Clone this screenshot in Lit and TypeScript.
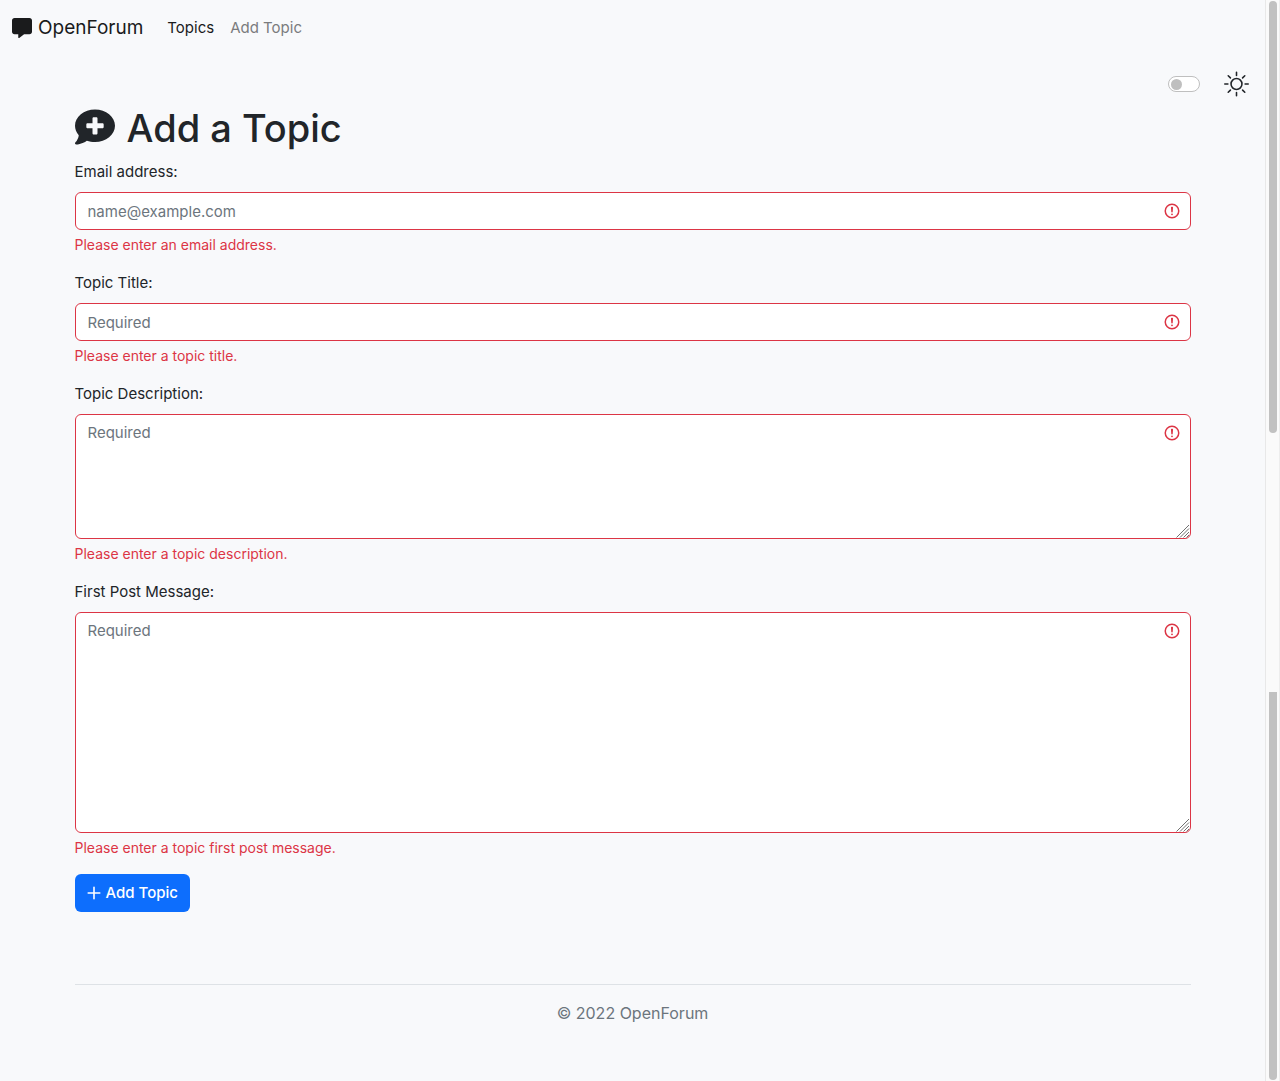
import { LitElement, html, svg, css, nothing } from "lit";
import { customElement, state } from "lit/decorators.js";

interface Field {
  id: string;
  label: string;
  placeholder: string;
  error: string;
  kind: "email" | "text" | "short" | "long";
}

const FIELDS: Field[] = [
  { id: "email", label: "Email address:", placeholder: "name@example.com", error: "Please enter an email address.", kind: "email" },
  { id: "title", label: "Topic Title:", placeholder: "Required", error: "Please enter a topic title.", kind: "text" },
  { id: "description", label: "Topic Description:", placeholder: "Required", error: "Please enter a topic description.", kind: "short" },
  { id: "message", label: "First Post Message:", placeholder: "Required", error: "Please enter a topic first post message.", kind: "long" },
];

const messageIcon = svg`<svg class="icon brand-icon" viewBox="0 0 512 512" aria-hidden="true"><path d="M64 0C28.7 0 0 28.7 0 64V352c0 35.3 28.7 64 64 64h96v80c0 6.1 3.4 11.6 8.8 14.3s11.9 2.1 16.8-1.5L309.3 416H448c35.3 0 64-28.7 64-64V64c0-35.3-28.7-64-64-64H64z"/></svg>`;

const commentIcon = svg`<svg class="icon title-icon" viewBox="0 12 512 512" aria-hidden="true"><path d="M256 448c141.4 0 256-93.1 256-208S397.4 32 256 32S0 125.1 0 240c0 45.1 17.7 86.8 47.7 120.9c-1.9 24.5-11.4 46.3-21.4 62.9c-5.5 9.2-11.1 16.6-15.2 21.6c-2.1 2.5-3.7 4.4-4.9 5.7c-.6 .6-1 1.1-1.3 1.4l-.3 .3c-4.6 4.6-5.9 11.4-3.4 17.4c2.5 6 8.3 9.9 14.8 9.9c28.7 0 57.6-8.9 81.6-19.3c22.9-10 42.4-21.9 54.3-30.6c31.8 11.5 67 17.9 104.1 17.9zM224 145c0-8.8 7.2-16 16-16h32c8.8 0 16 7.2 16 16v63h63c8.8 0 16 7.2 16 16v32c0 8.8-7.2 16-16 16H288v63c0 8.8-7.2 16-16 16H240c-8.8 0-16-7.2-16-16V272H161c-8.8 0-16-7.2-16-16V224c0-8.8 7.2-16 16-16h63V145z"/></svg>`;

const plusIcon = svg`<svg class="plus-icon" viewBox="0 0 14 16" aria-hidden="true"><path d="M7 2.2v11.6M1.2 8h11.6" fill="none" stroke="currentColor" stroke-width="1.6" stroke-linecap="round"/></svg>`;

const sunIcon = svg`<svg class="sun-icon" viewBox="0 0 16 16" aria-hidden="true"><circle cx="8" cy="8" r="3.5"/><path d="M8 .5v2M8 13.5v2M.5 8h2M13.5 8h2M2.7 2.7l1.41 1.41M11.89 11.89l1.41 1.41M2.7 13.3l1.41-1.41M11.89 4.11l1.41-1.41"/></svg>`;

const alertIcon = svg`<svg class="alert-icon" viewBox="0 0 12 12" aria-hidden="true"><circle cx="6" cy="6" r="4.5" fill="none" stroke="currentColor"/><path d="M5.8 3.6h.4L6 6.5z" fill="none" stroke="currentColor" stroke-linejoin="round"/><circle cx="6" cy="8.2" r=".6" fill="currentColor"/></svg>`;

const gripIcon = svg`<svg class="grip-icon" viewBox="0 0 14 14" aria-hidden="true"><path d="M0.5 13.5L13 1M4 13.5L13 4.5M7.5 13.5L13 8M10.5 13.5L13 11"/></svg>`;

@customElement("app-root")
export class AppRoot extends LitElement {
  @state() private dark = false;

  static styles = css`
    :host {
      display: flex;
      min-height: 100vh;
      background: #f8f9fb;
      color: #212529;
      font: 400 15px/24px Inter, "Liberation Sans", sans-serif;
    }
    *, *::before, *::after { box-sizing: border-box; }
    a { color: inherit; text-decoration: none; }
    .icon { fill: currentColor; flex: none; }

    .page { flex: 1; min-width: 0; }
    .navbar {
      display: flex;
      align-items: center;
      gap: 24px;
      height: 56px;
      padding: 0 12px;
      color: #1a1b1c;
    }
    .brand {
      display: flex;
      align-items: center;
      gap: 6px;
      font-size: 19px;
    }
    .brand-icon { width: 20px; height: 20px; }
    .links { display: flex; gap: 16px; }
    .link-muted { color: #7b7c7e; }

    .theme {
      display: flex;
      justify-content: flex-end;
      align-items: center;
      gap: 24px;
      height: 48px;
      padding: 8px 16px 0 0;
    }
    .switch {
      appearance: none;
      display: flex;
      align-items: center;
      width: 32px;
      height: 16px;
      margin: 0;
      padding: 0 2px;
      border: 1px solid #bfbfbf;
      border-radius: 8px;
      background: #fff;
    }
    .switch::before {
      content: "";
      width: 11px;
      height: 11px;
      border-radius: 50%;
      background: #bfbfbf;
    }
    .switch:checked { justify-content: flex-end; }
    .sun-icon {
      width: 25px;
      height: 26px;
      fill: none;
      stroke: #212529;
      stroke-linecap: round;
    }

    .container {
      max-width: 1140px;
      margin: 0 auto;
      padding: 0 12px;
    }
    .title {
      display: flex;
      align-items: center;
      gap: 12px;
      margin: 0 0 8px;
      font-size: 38px;
      line-height: 48px;
      font-weight: 500;
    }
    .title-icon { width: 40px; height: 40px; }

    .field { margin-bottom: 16px; }
    .label { display: block; margin-bottom: 8px; }
    .control { position: relative; }
    .input {
      display: block;
      width: 100%;
      height: 38px;
      margin: 0;
      padding: 6px 36px 6px 12px;
      border: 1px solid #dc3545;
      border-radius: 6px;
      background: #fff;
      color: #212529;
      font: inherit;
    }
    .input::placeholder { color: #6c757d; opacity: 1; }
    .input::-webkit-resizer { background: transparent; }
    .short { height: 125px; resize: vertical; }
    .long { height: 221px; resize: vertical; }
    .alert-icon {
      position: absolute;
      top: 10px;
      right: 10px;
      width: 18px;
      height: 18px;
      color: #dc3545;
      pointer-events: none;
    }
    .grip-icon {
      position: absolute;
      right: 1px;
      bottom: 1px;
      width: 14px;
      height: 14px;
      fill: none;
      stroke: #707070;
      pointer-events: none;
    }
    .error {
      margin: 4px 0 0;
      color: #dc3545;
      font-size: 14px;
      line-height: 21px;
    }
    .submit {
      display: flex;
      align-items: center;
      gap: 5px;
      height: 38px;
      padding: 0 12px;
      border: 0;
      border-radius: 6px;
      background: #0d6efd;
      color: #fff;
      font: inherit;
      font-weight: 500;
      cursor: pointer;
    }
    .plus-icon { width: 14px; height: 16px; }

    .footer {
      margin-top: 72px;
      padding: 16px 0 56px;
      border-top: 1px solid #dee2e6;
      color: #6c757d;
      font-size: 16px;
      text-align: center;
    }

    .scroll-track {
      display: flex;
      flex-direction: column;
      justify-content: space-between;
      flex: none;
      width: 15px;
      padding: 1px 2px 1px 3px;
      border-left: 1px solid #e8e8e8;
      border-right: 1px solid #ededed;
      background: #fafafa;
    }
    .thumb { background: #c1c1c1; }
    .thumb-top { height: 40%; border-radius: 4px; }
    .thumb-bottom { height: 36%; border-radius: 0 0 4px 4px; }
  `;

  private renderField(f: Field) {
    const area = f.kind === "short" || f.kind === "long";
    return html`
      <div class="field">
        <label class="label" for=${f.id}>${f.label}</label>
        <div class="control">
          ${area
            ? html`<textarea class="input ${f.kind}" id=${f.id} placeholder=${f.placeholder} aria-invalid="true" aria-describedby="${f.id}-error"></textarea>`
            : html`<input class="input" id=${f.id} type=${f.kind} placeholder=${f.placeholder} aria-invalid="true" aria-describedby="${f.id}-error" />`}
          ${alertIcon}
          ${area ? gripIcon : nothing}
        </div>
        <p class="error" id="${f.id}-error">${f.error}</p>
      </div>
    `;
  }

  render() {
    return html`
      <div class="page">
        <nav class="navbar">
          <a class="brand" href="#">${messageIcon}<span>OpenForum</span></a>
          <div class="links">
            <a href="#topics">Topics</a>
            <a class="link-muted" href="#add">Add Topic</a>
          </div>
        </nav>
        <div class="theme">
          <input class="switch" type="checkbox" role="switch" id="theme" aria-label="Dark mode"
            .checked=${this.dark}
            @change=${(e: Event) => (this.dark = (e.target as HTMLInputElement).checked)} />
          ${sunIcon}
        </div>
        <main class="container">
          <h1 class="title">${commentIcon}<span>Add a Topic</span></h1>
          <form novalidate @submit=${(e: Event) => e.preventDefault()}>
            ${FIELDS.map((f) => this.renderField(f))}
            <button class="submit" type="submit">${plusIcon}<span>Add Topic</span></button>
          </form>
          <footer class="footer">© 2022 OpenForum</footer>
        </main>
      </div>
      <div class="scroll-track" aria-hidden="true">
        <div class="thumb thumb-top"></div>
        <div class="thumb thumb-bottom"></div>
      </div>
    `;
  }
}
